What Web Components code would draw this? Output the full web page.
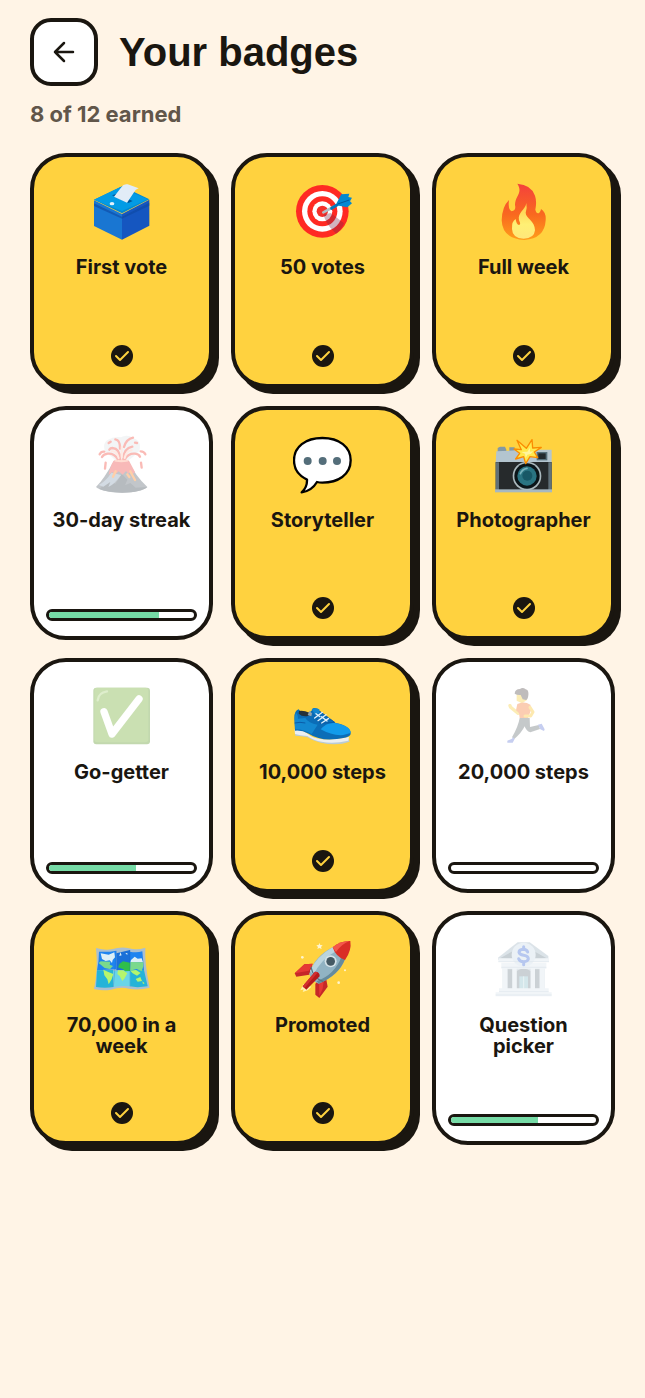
<!DOCTYPE html>
<html lang="en">
<head>
<meta charset="utf-8">
<meta name="viewport" content="width=device-width, initial-scale=1">
<title>Your badges</title>
<style>
  body {
    margin: 0;
    background: #FFF4E6;
    color: #1A1610;
    font-family: Inter, "Liberation Sans", sans-serif; }
</style>
</head>
<body>

<badges-page>
  <page-header slot="header">Your badges</page-header>
  <span slot="summary">8 of 12 earned</span>
  <badge-card icon="ballot" earned>First vote</badge-card>
  <badge-card icon="target" earned>50 votes</badge-card>
  <badge-card icon="fire" earned>Full week</badge-card>
  <badge-card icon="volcano" progress="76">30-day streak</badge-card>
  <badge-card icon="speech" earned>Storyteller</badge-card>
  <badge-card icon="camera" earned>Photographer</badge-card>
  <badge-card icon="tick" progress="60">Go-getter</badge-card>
  <badge-card icon="shoe" earned>10,000 steps</badge-card>
  <badge-card icon="runner" progress="0">20,000 steps</badge-card>
  <badge-card icon="map" earned>70,000 in a week</badge-card>
  <badge-card icon="rocket" earned>Promoted</badge-card>
  <badge-card icon="bank" progress="60">Question picker</badge-card>
</badges-page>

<script>
// every drawing is 180 units square, shown at 60px
const icons = {
  ballot: `<svg viewBox="216 111 180 180">
    <path fill="#0288D1" d="M222 164L306 124L388 163L306 205Z"/>
    <path fill="#039BE5" d="M222 164L300 127L384 163L306 198Z"/>
    <path fill="#1976D2" d="M222 166L306 207V284L222 243Z"/>
    <path fill="#1556C0" d="M388 164L306 207V284L388 242Z"/>
    <path fill="#0D47A1" opacity=".6" d="M222 175L306 215L388 173V182L306 221L222 183Z"/>
    <path fill="#01579B" d="M276 151L325 174L338 168L290 146Z"/>
    <path fill="#E1ECF7" d="M282 155L304 127Q311 115 323 118L356 130Q346 133 342 142L321 173Z"/>
    <ellipse cx="276" cy="176" rx="7" ry="5" fill="#E3F2FD"/>
  </svg>`,
  target: `<svg viewBox="69 36 180 180">
    <circle cx="157" cy="124" r="79" fill="#FF2A23"/>
    <circle cx="157" cy="124" r="61" fill="#fff"/>
    <circle cx="157" cy="124" r="45" fill="#FF2A23"/>
    <circle cx="157" cy="124" r="30" fill="#fff"/>
    <circle cx="157" cy="124" r="17" fill="#F4302B"/>
    <path fill="#7A2848" opacity=".35" d="M161 134L182 129L222 160Q214 180 198 191L180 172Q164 150 161 134Z"/>
    <path stroke="#B0BEC5" stroke-width="8" stroke-linecap="round" d="M160 127L190 111"/>
    <path stroke="#0277BD" stroke-width="9" stroke-linecap="round" d="M185 115L210 99"/>
    <path fill="#0288D1" d="M200 99L214 73L238 71L235 81L246 83L240 94L246 100L232 112L207 107Z"/>
    <path fill="none" stroke="#01579B" stroke-width="3" d="M203 102L238 90"/>
  </svg>`,
  fire: `<svg viewBox="672 36 180 180">
    <defs>
      <linearGradient id="flame" x1="0" y1="0" x2="0" y2="1">
        <stop offset="0" stop-color="#F4413C"/><stop offset=".55" stop-color="#F9691F"/><stop offset="1" stop-color="#FF9D1B"/>
      </linearGradient>
      <linearGradient id="core" x1="0" y1="0" x2="0" y2="1">
        <stop offset="0" stop-color="#FFCA45"/><stop offset=".6" stop-color="#FFF075"/><stop offset="1" stop-color="#FFE77A"/>
      </linearGradient>
    </defs>
    <path fill="url(#flame)" d="M742 41Q784 44 795 77Q801 95 796 119Q800 134 808 128Q813 122 813 117Q829 127 827 151Q824 206 763 210Q697 207 695 151Q696 110 717 90Q713 119 725 124Q739 122 735 105C735 77 760 69 742 41Z"/>
    <path fill="url(#core)" d="M769 99Q772 112 767 128C767 145 795 151 795 181Q793 205 761 206Q727 205 726 177Q725 153 737 147Q739 164 747 165Q754 164 747 151C742 127 766 120 769 99Z"/>
  </svg>`,
  volcano: `<svg viewBox="216 104 180 180">
    <path fill="#CFD8DC" opacity=".6" d="M286 180Q270 164 258 159Q244 132 263 119Q281 108 303 111Q320 100 340 113Q366 122 358 151Q342 168 326 180Z"/>
    <path fill="#68727C" d="M228 260Q252 236 282 181Q305 173 325 181Q345 225 382 260Q365 276 306 277Q246 276 228 260Z"/>
    <path fill="#4A5660" d="M306 221L322 238L315 255L331 248L347 262L382 260Q365 276 306 277Q262 276 238 266L269 241L286 250Z"/>
    <path fill="#92A6BA" d="M274 217Q259 241 236 254L250 259L271 245L265 260Q283 253 303 224Z"/>
    <path fill="#EF5350" d="M281 181Q304 172 327 181L345 215L339 221L333 213L325 220L318 212L308 223L296 213L287 222L276 215L266 224Q269 199 281 181Z"/>
    <path fill="none" stroke="#FF8A28" stroke-width="7" stroke-linecap="round" d="M287 213L279 229M331 213L345 239M322 222L328 230"/>
    <ellipse cx="304" cy="181" rx="21" ry="5" fill="#FFAB91"/>
    <g fill="none" stroke="#F4574C" stroke-width="7" stroke-linecap="round">
      <path d="M300 176Q300 145 277 143Q271 143 268 148M293 176Q282 158 263 160Q250 162 246 170M310 176Q311 144 337 139M315 176Q326 158 345 160Q357 162 360 169"/>
      <path d="M300 145Q301 119 286 117M312 140Q319 116 339 112M239 162Q243 153 253 154M362 153Q372 153 376 162M257 187L255 205M363 187L365 202M266 128L272 124M345 127L351 128"/>
    </g>
    <g fill="none" stroke="#FFCCBC" stroke-width="6" stroke-linecap="round"><path d="M296 173Q290 151 275 153M314 173Q319 151 335 150M305 171V139"/></g>
  </svg>`,
  speech: `<svg viewBox="39 29 180 180">
    <path fill="#fff" stroke="#000" stroke-width="7" stroke-linejoin="round" d="M127 38C178 38 212 65 212 105C212 149 173 172 127 172Q118 172 111 170Q95 197 65 201Q82 186 81 163C55 151 42 133 42 105C42 65 76 38 127 38Z"/>
    <g fill="#546E7A"><circle cx="83" cy="107" r="12"/><circle cx="128" cy="107" r="12"/><circle cx="171" cy="107" r="12"/></g>
  </svg>`,
  camera: `<svg viewBox="642 29 180 180">
    <path fill="#8399A5" d="M653 68L660 64H675L679 73V82H653ZM688 66H704V80H688Z"/>
    <path fill="#B3C5CF" d="M649 78L712 75L717 79H762L770 73H815V113H647Z"/>
    <rect x="647" y="110" width="168" height="84" fill="#262A2C"/>
    <path fill="#607078" d="M647 111H657V194H647ZM805 111H815V194H805Z"/>
    <rect x="645" y="192" width="171" height="9" fill="#A6B8C1"/>
    <rect x="770" y="80" width="32" height="25" fill="#546E7A"/>
    <rect x="775" y="84" width="22" height="17" fill="#20292E"/>
    <circle cx="741" cy="152" r="43" fill="#ABB9BE"/>
    <circle cx="741" cy="152" r="38" fill="#0B1519"/>
    <circle cx="741" cy="152" r="29" fill="#2A7482"/>
    <circle cx="742" cy="151" r="15" fill="#185866"/>
    <path fill="none" stroke="#7AB3BD" stroke-width="5" stroke-linecap="round" d="M721 145Q727 131 741 129"/>
    <path fill="#FFE94D" stroke="#FB8C00" stroke-width="4" stroke-linejoin="round" d="M739 69L756 43L758 68L784 66L763 80L773 97L750 94L737 115L731 94L707 101L719 84L702 71L724 73L711 45Z"/>
    <path fill="#FFF59D" d="M742 79L750 67L750 79L760 78L752 86L742 88L737 98L735 85L724 80Z"/>
  </svg>`,
  tick: `<svg viewBox="96 37 180 180">
    <rect x="100" y="39" width="170" height="170" rx="9" fill="#689F38"/>
    <rect x="103" y="39" width="162" height="164" rx="9" fill="#7CB342"/>
    <path fill="none" stroke="#AED581" stroke-width="7" stroke-linecap="round" d="M113 77Q115 54 141 50"/>
    <path fill="none" stroke="#fff" stroke-width="22" stroke-linecap="round" stroke-linejoin="round" d="M132 111L156 178L237 73"/>
  </svg>`,
  shoe: `<svg viewBox="699 37 180 180">
    <path fill="#B9CBD6" d="M704 167Q724 164 753 188Q789 207 864 190L869 201Q831 215 782 204Q759 199 741 187Q722 184 706 183Z"/>
    <path fill="#ECEFF1" d="M704 164Q729 165 752 184Q786 203 867 187L865 198Q820 208 785 201Q761 198 742 184Q720 182 705 178Z"/>
    <path fill="#0B6DB7" d="M703 130Q703 107 716 104Q723 116 743 115Q755 112 759 101Q773 98 779 109L827 145Q873 154 872 178Q869 191 819 194Q778 197 746 177Q726 166 705 168Z"/>
    <path fill="#129BEA" d="M782 164Q800 142 825 145Q873 154 872 175L850 181Q817 184 782 164Z"/>
    <path fill="#26323B" d="M717 109Q730 106 750 115L746 123Q728 128 716 117Z"/>
    <path fill="#1388D0" d="M707 114Q714 119 714 132L736 130Q745 146 773 150L755 178Q728 163 706 164Q702 133 707 114ZM755 103Q766 98 778 104V114L766 121Z"/>
    <path fill="#90A4AE" d="M748 109L756 116L754 125L743 121Z"/>
    <path fill="none" stroke="#0A5CA8" stroke-width="3" d="M759 119L781 146L824 143M779 110L824 143M704 145Q720 141 736 145"/>
    <path fill="none" stroke="#E1F0FA" stroke-width="4" stroke-linecap="round" d="M764 130L787 113M774 138L798 120M785 145L806 131M768 117L780 126M785 126L801 139"/>
  </svg>`,
  runner: `<svg viewBox="192 112 180 180">
    <path fill="#F9D34A" d="M260 133H291V151L276 161L260 153Z"/>
    <path fill="#625A5A" d="M254 132Q255 118 270 118Q278 111 287 119Q297 121 295 137Q294 149 288 151L278 149L272 136Q261 137 254 132Z"/>
    <path fill="none" stroke="#F9D34A" stroke-width="10" stroke-linecap="round" stroke-linejoin="round" d="M268 171L264 191L242 173L240 168"/>
    <path fill="#F78340" d="M262 163Q282 153 301 165L304 179L294 205H269L267 190L258 182Z"/>
    <path fill="none" stroke="#FBC93A" stroke-width="9" stroke-linecap="round" stroke-linejoin="round" d="M300 173L309 187L302 199L285 199"/>
    <path fill="#717A7D" d="M269 205H299L300 232L326 226L330 238L301 248Q288 244 284 230Q275 249 253 268L246 263Q265 230 269 205Z"/>
    <path fill="#7286DC" d="M249 263L254 268L248 279H232V273L246 267ZM324 225L335 222L344 239L342 244L331 239Z"/>
  </svg>`,
  map: `<svg viewBox="96 30 180 180">
    <path fill="#AABFD0" d="M108 54Q135 62 155 58Q184 49 207 55Q230 62 256 53Q253 98 269 173Q235 182 207 176Q182 169 153 179Q127 183 102 177Q115 119 108 54Z"/>
    <path fill="#1E84F0" d="M117 65Q143 67 169 62V118L111 121Q117 94 117 65ZM210 65Q230 69 247 64L252 121L210 120Z"/>
    <path fill="#1A70D8" d="M169 70L210 60V122L169 121Z"/>
    <path fill="#25B3D8" d="M111 121L160 120V171Q135 176 108 171ZM210 120H252L263 169Q230 174 210 169Z"/>
    <path fill="#69D5E8" d="M160 122L211 120V169Q184 166 160 171Z"/>
    <path fill="#DDEFF6" d="M122 70L146 74L163 67L165 82L158 90L156 99L149 91L137 93L126 87ZM213 90L224 80L233 86L245 85L249 97H211ZM181 67L185 76L178 78ZM196 70L202 69L202 75Z"/>
    <path fill="#7AD98C" d="M122 94L151 95L149 104L159 108L150 117L134 114L116 99ZM211 96L250 97V109L245 124L230 117L210 122Z"/>
    <path fill="#2FBE4B" d="M174 112L179 101L189 94L210 98V123L195 124L190 118Z"/>
    <path fill="#B5F56D" d="M130 119L145 126L160 132L155 148L146 163L142 148L133 136ZM174 121L189 121L202 130L194 145L187 153L179 138L172 132ZM211 122L228 120L242 129L231 137L218 130ZM227 147L241 141L246 153L233 155ZM247 154L254 160L249 162Z"/>
    <path fill="none" stroke="#0E5FC4" stroke-width="2" opacity=".4" d="M169 64L160 171M210 60V169"/>
  </svg>`,
  rocket: `<svg viewBox="699 30 180 180">
    <path fill="#FFF3B0" d="M731 162L721 181L731 178L728 186L743 181L754 170Z"/>
    <path fill="#C62828" d="M758 101L733 103L704 130L709 140L748 134ZM777 145L798 143L803 170L778 204L766 194V162Z"/>
    <path fill="#E53935" d="M758 101L733 103L704 130L747 122ZM777 150L792 147L788 176L778 198Z"/>
    <path fill="#91B3C3" d="M748 131Q763 79 819 51L855 88Q836 137 776 161Q754 153 748 131Z"/>
    <path fill="#BAD4DE" d="M750 123Q770 79 819 51L830 62Q782 88 761 134Z"/>
    <path fill="#668B9D" d="M770 154Q825 134 845 79L855 88Q836 137 776 161Z"/>
    <path fill="#D92D26" d="M818 52Q842 32 871 33Q876 60 855 90Q828 82 818 52Z"/>
    <path fill="#F4564A" d="M818 52Q842 32 867 34Q845 42 828 66Z"/>
    <path fill="none" stroke="#547585" stroke-width="4" d="M753 111Q759 144 790 155"/>
    <circle cx="812" cy="94" r="18" fill="#D5E3E8"/><circle cx="812" cy="94" r="13" fill="#455A64"/>
    <path fill="#B71C1C" d="M728 169L765 125Q780 125 779 139L739 179Z"/>
    <path fill="#D32F2F" d="M728 169L765 125L774 127L733 175Z"/>
    <path fill="#FFF5CF" d="M778 39L781 45L788 46L783 51L785 57L778 54L772 57L774 51L769 46L776 45Z"/>
    <g fill="#FFF5CF"><circle cx="727" cy="82" r="4"/><circle cx="855" cy="121" r="3"/><circle cx="836" cy="158" r="4"/></g>
  </svg>`,
  bank: `<svg viewBox="192 105 180 180">
    <path fill="#A8BAC8" d="M204 158L263 112H299L355 153V165H204Z"/>
    <path fill="#788B98" d="M210 160L253 136L252 164ZM350 160L307 136L309 164Z"/>
    <rect x="218" y="182" width="126" height="76" fill="#B9C7D1"/>
    <path fill="#7E8D97" d="M233 193H247V251H233ZM315 193H329V251H315ZM260 198Q280 184 302 198V256H260Z"/>
    <path fill="#96C5CF" d="M268 214H294V256H268Z"/>
    <path fill="none" stroke="#E5F0F2" stroke-width="2" d="M281 214V256"/>
    <path fill="#DDE7EF" d="M205 160H357V170H205ZM214 173H349V191H214ZM217 191H232V253H217ZM247 191H260V253H247ZM302 191H315V253H302ZM329 191H344V253H329ZM207 250H356V260H207ZM197 262H365V274H197Z"/>
    <circle cx="281" cy="149" r="36" fill="#CFDEEA"/>
    <path fill="none" stroke="#ABC0CF" stroke-width="2" d="M205 170H357M214 187H349M207 260H356M197 270H365"/>
    <path fill="none" stroke="#4A74D9" stroke-width="9" stroke-linecap="round" d="M293 141Q290 133 280 133Q267 134 267 142Q268 149 281 151Q295 153 295 162Q293 170 281 170Q269 170 266 161M281 125V133M281 170V179"/>
  </svg>`
};

class BadgesPage extends HTMLElement {
  constructor(){
    super();
    this.attachShadow({mode: 'open'});
    this.shadowRoot.innerHTML = `
    <style>
      :host {
        display: block;
        padding: 18px 30px; }
      .summary {
        margin: 14px 0 25px;
        color: #61564A;
        font-size: 22px;
        font-weight: 700;
        line-height: 28px; }
      .grid {
        display: grid;
        grid-template-columns: repeat(3, minmax(0, 1fr));
        align-items: start;
        gap: 18px; }
    </style>
    <main>
      <slot name="header"></slot>
      <p class="summary"><slot name="summary"></slot></p>
      <div class="grid" role="list"><slot></slot></div>
    </main>`;
  }
}

class PageHeader extends HTMLElement {
  constructor(){
    super();
    this.attachShadow({mode: 'open'});
    this.shadowRoot.innerHTML = `
    <style>
      :host { display: block; }
      header {
        display: flex;
        align-items: center;
        gap: 21px; }
      button {
        display: grid;
        place-items: center;
        flex: none;
        width: 68px;
        height: 68px;
        padding: 0;
        border: 4px solid #1A1610;
        border-radius: 21px;
        background: #fff;
        color: inherit; }
      svg {
        width: 24px;
        height: 24px; }
      h1 {
        margin: 0;
        font-family: "Liberation Sans", Arial, sans-serif;
        font-size: 40px;
        font-weight: 700;
        line-height: 48px; }
    </style>
    <header>
      <button type="button" aria-label="Back">
        <svg viewBox="0 0 24 24" fill="none" stroke="currentColor" stroke-width="2.5" stroke-linecap="round" stroke-linejoin="round"><path d="M12 3L3 12L12 21M3 12H21"/></svg>
      </button>
      <h1><slot></slot></h1>
    </header>`;
  }
}

class BadgeCard extends HTMLElement {
  constructor(){
    super();
    this.attachShadow({mode: 'open'});
  }

  connectedCallback(){
    var earned = this.hasAttribute('earned');
    var progress = this.getAttribute('progress');
    this.setAttribute('role', 'listitem');

    var status = earned
      ? `<svg class="check" viewBox="0 0 26 26" role="img" aria-label="Earned"><circle cx="13" cy="13" r="11"/><path d="M7 13L11 17L19 9"/></svg>`
      : `<div class="bar" role="progressbar" aria-label="Progress" aria-valuenow="${progress}"><div class="fill" style="width: ${progress}%"></div></div>`;

    this.shadowRoot.innerHTML = `
    <style>
      :host {
        display: flex;
        flex-direction: column;
        align-items: center;
        box-sizing: border-box;
        aspect-ratio: 39 / 50;
        padding: 25px 12px 15px;
        border: 4px solid #1A1610;
        border-radius: 36px;
        background: #fff; }
      :host([earned]) {
        background: #FFD23F;
        box-shadow: 6px 6px 0 #1A1610; }
      .icon {
        width: 60px;
        height: 60px;
        opacity: .4; }
      :host([earned]) .icon { opacity: 1; }
      .icon svg {
        display: block;
        width: 100%;
        height: 100%; }
      .name {
        margin-top: 15px;
        font-size: 20px;
        font-weight: 700;
        line-height: 21px;
        text-align: center; }
      .check {
        width: 26px;
        height: 26px;
        margin-top: auto;
        fill: #1A1610; }
      .check path {
        fill: none;
        stroke: #FFD23F;
        stroke-width: 2;
        stroke-linecap: round;
        stroke-linejoin: round; }
      .bar {
        box-sizing: border-box;
        width: 100%;
        height: 12px;
        margin-top: auto;
        border: 3px solid #1A1610;
        border-radius: 6px;
        background: #fff;
        overflow: hidden; }
      .fill {
        height: 100%;
        background: #76DBA6; }
    </style>
    <div class="icon" aria-hidden="true">${icons[this.getAttribute('icon')]}</div>
    <div class="name"><slot></slot></div>
    ${status}`;
  }
}

customElements.define('badges-page', BadgesPage);
customElements.define('page-header', PageHeader);
customElements.define('badge-card', BadgeCard);
</script>
</body>
</html>
